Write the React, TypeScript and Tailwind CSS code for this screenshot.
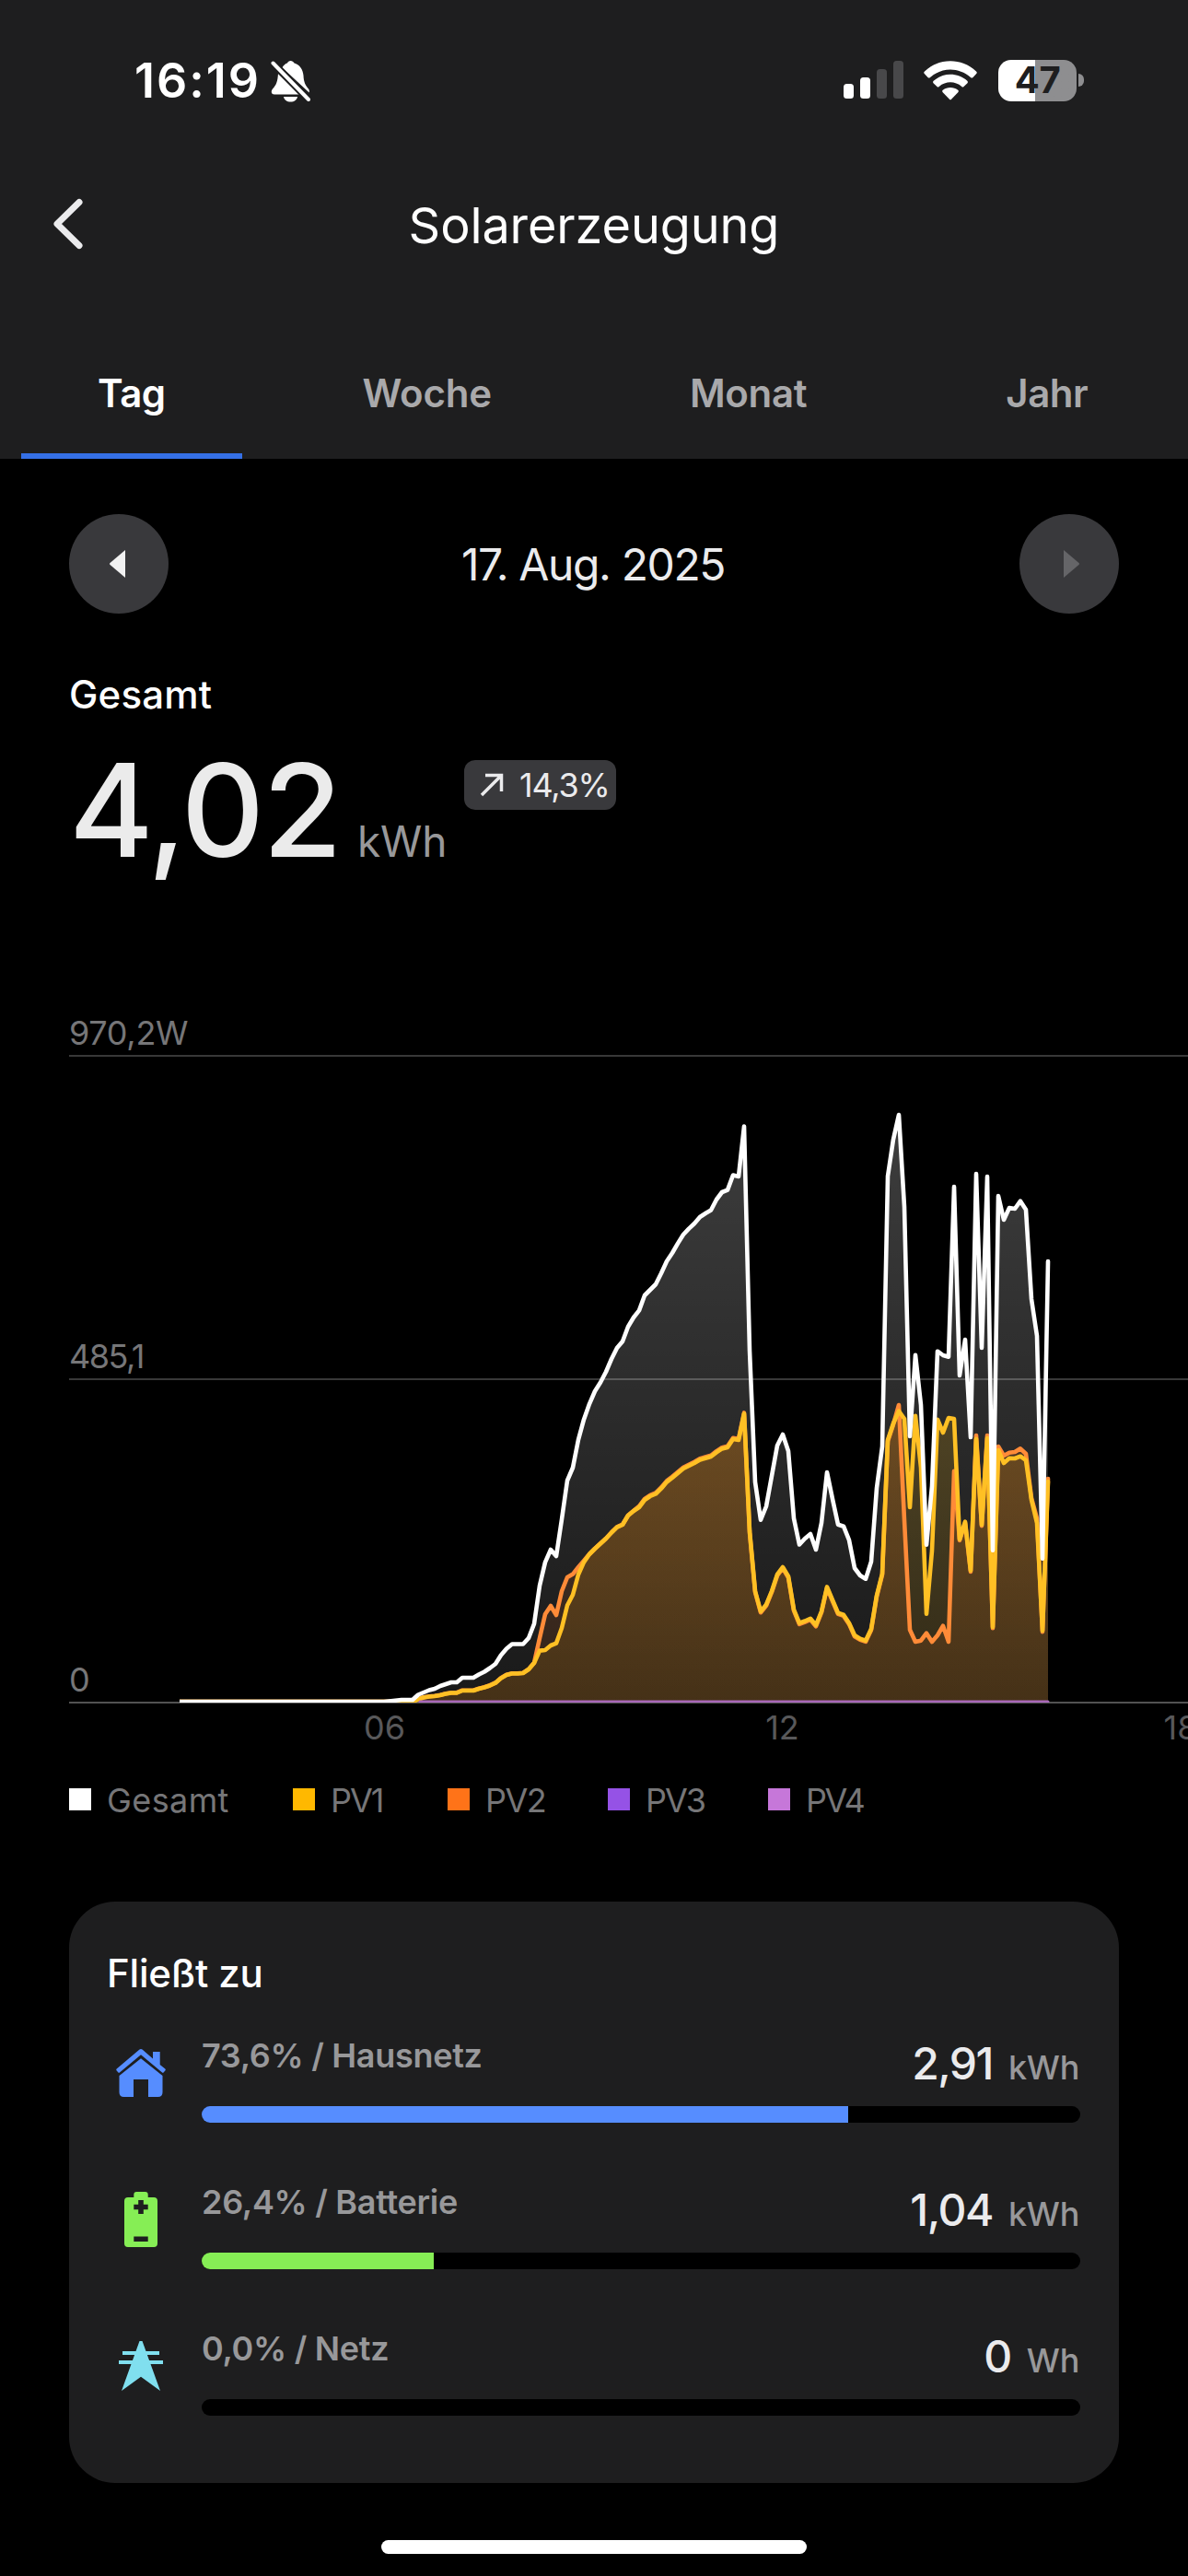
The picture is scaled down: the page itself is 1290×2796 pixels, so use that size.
import { ReactNode } from "react";

const CHART_TOP = 1100;
const BASELINE = 1847;
const STEP = 6;

// y values per 5 minutes, first sample sits at START_X
const START_X = 448;

const total = [
    1845, 1839.5, 1837, 1834.5, 1833, 1830, 1828, 1826, 1826, 1821, 1821, 1821, 1817.5, 1814.5, 1810.5, 1806, 1796.5,
    1789.5, 1784.5, 1784.5, 1784.5, 1778, 1762.5, 1721, 1695.6, 1682, 1689, 1649, 1607, 1593, 1562.6, 1540.7, 1523.8,
    1510, 1500.5, 1489, 1475, 1463, 1456, 1440, 1430, 1422.4, 1406, 1400, 1394, 1382, 1369, 1360, 1349.6, 1340, 1333.6,
    1328, 1321, 1317, 1313.5, 1302, 1294, 1291.6, 1275.5, 1277, 1222.5, 1466, 1608.6, 1649.6, 1635, 1602, 1569, 1557,
    1575, 1648, 1676.4, 1670, 1665, 1682, 1653, 1598, 1627, 1654.7, 1656.7, 1671.7, 1702, 1710, 1713.7, 1695, 1615,
    1570, 1276.7, 1236.7, 1210, 1310, 1559, 1470.7, 1525, 1676.7, 1613, 1466.7, 1471, 1472.7, 1288, 1493, 1454, 1560,
    1274, 1463, 1277, 1682.7, 1298, 1324, 1311, 1312, 1303.7, 1313, 1410, 1450, 1691.7, 1369,
];

const pv1 = [
    1847, 1844.5, 1842.5, 1841.5, 1841, 1840, 1838.5, 1837.5, 1837.5, 1835, 1835, 1835, 1833, 1831.5, 1829.5, 1826.7,
    1821.6, 1818, 1816.5, 1816.5, 1816, 1812, 1805, 1791.6, 1791, 1786, 1783.6, 1767, 1742.5, 1731, 1709, 1695.6, 1687,
    1681, 1675.5, 1670, 1663.5, 1657.7, 1655, 1645, 1640, 1636, 1628, 1624, 1621.5, 1615.7, 1608.6, 1604, 1599, 1594,
    1591, 1588, 1584.5, 1582.7, 1581, 1576.4, 1572.4, 1571, 1562, 1563, 1534.6, 1662, 1727, 1749, 1741.6, 1727, 1709,
    1701, 1711, 1747, 1761.7, 1759.5, 1756.8, 1764, 1749, 1722.4, 1736.7, 1750.7, 1752.7, 1761.7, 1775, 1778.7, 1780.7,
    1768, 1731.7, 1708, 1563, 1545, 1531.7, 1540, 1636, 1536.7, 1593, 1751.7, 1683, 1540.7, 1555, 1539, 1540, 1670.7,
    1651.7, 1704.7, 1561.7, 1655, 1561, 1766, 1574, 1588, 1582.7, 1583, 1580.7, 1585, 1628, 1653, 1770, 1608,
];

// PV2 follows PV1 apart from these samples
const pv2Changes: Record<number, number> = {
    23: 1778, 24: 1752, 25: 1743, 26: 1753, 27: 1727, 28: 1712, 29: 1708.6, 30: 1701, 31: 1694,
    88: 1525, 89: 1650, 90: 1769, 91: 1782, 92: 1780.7, 93: 1772.7, 94: 1782, 95: 1775, 96: 1764.7, 97: 1782,
    98: 1596.7, 102: 1558, 104: 1558, 106: 1570, 107: 1580, 108: 1576.7, 109: 1576, 110: 1572.3, 111: 1578,
    112: 1626, 113: 1648, 115: 1605,
};

const pv2 = pv1.map((y, i) => pv2Changes[i] ?? (i < 61 ? y - (i > 40 ? 1.2 : 0.3) : y + 1.2));

function toLine(values: number[]) {
    return values.map((y, i) => `L${START_X + i * STEP} ${y}`).join(" ");
}

const END_X = START_X + (total.length - 1) * STEP;
const totalLine = `M195 1847 H417 L427 1846 L436 1845 ${toLine(total)}`;
const pv1Line = `M195 1847 H436 ${toLine(pv1)}`;
const pv2Line = `M195 1847 H436 ${toLine(pv2)}`;
const close = `V${BASELINE + 1} H195 Z`;

const legend = [
    { name: "Gesamt", color: "bg-white", width: "w-[243px]", tracking: "tracking-[0.4px]" },
    { name: "PV1", color: "bg-[#ffb800]", width: "w-[168px]", tracking: "tracking-[-2px]" },
    { name: "PV2", color: "bg-[#ff7318]", width: "w-[174px]", tracking: "tracking-[-1.5px]" },
    { name: "PV3", color: "bg-[#9552e6]", width: "w-[174px]", tracking: "tracking-[-2px]" },
    { name: "PV4", color: "bg-[#c677d9]", width: "w-[174px]", tracking: "tracking-[-2.5px]" },
];

function StatusBar() {
    return (
        <div className="flex h-[174px] items-center pl-[146px] pr-[113px]">
            <span className="mt-0.5 w-[148px] text-[52px] font-semibold leading-none tracking-[2px]">16:19</span>
            <svg className="mt-0.5" width="44" height="46" viewBox="0 0 44 46" fill="#fff">
                <path d="M12 9C14 5.500 16 4 18 3.500C19 0 24 0 25.500 3.500C31 5 35 10 35.500 17C35.800 24 37.500 27.500 41 31.500C42 33 42 34 41.700 35.500L12.500 8.500Z" />
                <path d="M8 15L31.500 37.500H4C0.500 37.500 0 34 2 31.500C6 27.500 7.500 23 8 15Z" />
                <path d="M14 40H29C28.500 43.500 25.500 45.500 21.500 45.500C17.500 45.500 14.500 43.500 14 40Z" />
                <path d="M2.500 3.500L41 43" stroke="#1e1e1f" strokeWidth="8" />
                <path d="M2.500 3.500L41 43" stroke="#fff" strokeWidth="4" strokeLinecap="round" />
            </svg>
            <div className="ml-auto flex items-center">
                <svg width="65" height="42" viewBox="0 0 65 42" fill="#fff">
                    <rect x="0" y="25" width="11" height="16" rx="3.500" />
                    <rect x="18" y="18" width="11" height="23" rx="3.500" />
                    <rect x="36" y="9" width="11" height="32" rx="3.500" fill="#48484a" />
                    <rect x="54" y="0" width="11" height="41" rx="3.500" fill="#48484a" />
                </svg>
                <svg className="ml-[22px]" width="58" height="43" viewBox="0 0 58 43" fill="#fff">
                    <path d="M1 14.200Q-0.600 12.800 1 11.400C17 -3.500 41 -3.500 57 11.400Q58.600 12.800 57 14.200L53.500 18Q52.200 19 51 18C38 6.500 20 6.500 7 18Q5.800 19 4.500 18Z" />
                    <path d="M10.500 24.200Q9.500 23 10.700 21.800C21 12.500 37 12.500 47.300 21.800Q48.500 23 47.500 24.200L43.500 28Q42.500 29 41.300 28C34 21.800 24 21.800 16.700 28Q15.500 29 14.500 28Z" />
                    <path d="M20.500 34Q19.500 32.800 20.800 31.800C25.500 28.200 32.500 28.200 37.200 31.800Q38.500 32.800 37.500 34L30 41.700Q29 42.700 28 41.700Z" />
                </svg>
                <div className="ml-[23px] flex h-[45px] w-[85px] items-center justify-center rounded-[14px] bg-linear-to-r from-white from-47% to-[#8e8e90] to-47%">
                    <span className="text-[40px] font-bold leading-none tracking-[-0.5px] text-[#1e1e1f]">47</span>
                </div>
                <div className="ml-0.5 h-[14px] w-[6px] rounded-r-full bg-[#8e8e90]" />
            </div>
        </div>
    );
}

function Header() {
    return (
        <header className="h-[498px] bg-[#1e1e1f]">
            <StatusBar />
            <div className="relative flex h-[140px] items-center justify-center">
                <svg className="absolute left-[56px] top-[40px]" width="36" height="60" viewBox="0 0 36 60" fill="none">
                    <path d="M30 5.500L6 29L30 52.500" stroke="#ebebed" strokeWidth="7" strokeLinecap="round" strokeLinejoin="round" />
                </svg>
                <h1 className="mt-0.5 text-[54px] leading-none tracking-[-0.1px]">Solarerzeugung</h1>
            </div>
            <nav className="flex h-[184px] pl-[106px] text-[42px] font-semibold tracking-[-0.5px] text-[#a9a9ab]">
                <div className="relative pt-[92px] leading-[42px] text-white">
                    Tag
                    <span className="absolute bottom-0 left-1/2 h-[6px] w-[240px] -translate-x-1/2 bg-[#3570e6]" />
                </div>
                <div className="ml-[214px] pt-[92px] leading-[42px] tracking-[-0.2px]">Woche</div>
                <div className="ml-[215px] pt-[92px] leading-[42px] tracking-[-0.3px]">Monat</div>
                <div className="ml-[216px] pt-[92px] leading-[42px]">Jahr</div>
            </nav>
        </header>
    );
}

function DateRow() {
    return (
        <div className="mt-[60px] flex h-[108px] items-center justify-between px-[75px]">
            <div className="flex h-[108px] w-[108px] items-center justify-center rounded-full bg-[#39393c]">
                <svg className="mr-1" width="17" height="30" viewBox="0 0 17 30" fill="#f2f2f2">
                    <path d="M17 0V30L0.500 16Q-0.500 15 0.500 14Z" />
                </svg>
            </div>
            <span className="mt-0.5 pr-0.5 text-[48px] leading-none tracking-[-1.4px] text-[#ebebed]">17. Aug. 2025</span>
            <div className="flex h-[108px] w-[108px] items-center justify-center rounded-full bg-[#39393c]">
                <svg className="ml-1" width="17" height="30" viewBox="0 0 17 30" fill="#656568">
                    <path d="M0 0V30L16.500 16Q17.500 15 16.500 14Z" />
                </svg>
            </div>
        </div>
    );
}

function Summary() {
    return (
        <section className="h-[434px] px-[75px] pt-[67px]">
            <h2 className="text-[42px] font-medium leading-[42px] tracking-[0.2px]">Gesamt</h2>
            <div className="mt-[34px] flex h-[140px] items-start">
                <span className="w-[313px] text-[140px] font-medium leading-[140px] tracking-[-2px] text-[#ebebeb]">4,02</span>
                <span className="mt-[81px] w-[116px] text-[46px] leading-[46px] tracking-[-0.2px] text-[#98989a]">kWh</span>
                <div className="mt-4 flex h-[54px] w-[165px] items-center rounded-xl bg-[#39393c] pl-[17px]">
                    <svg width="26" height="26" viewBox="0 0 26 26" fill="none" stroke="#ebebed" strokeWidth="3.500">
                        <path d="M2 24L23 3M6 2.500H23.500V20" />
                    </svg>
                    <span className="ml-[17px] text-[36px] leading-none tracking-[-1.2px] text-[#ebebed]">14,3%</span>
                </div>
            </div>
        </section>
    );
}

function Gradient({ id, color }: { id: string; color: string }) {
    return (
        <linearGradient id={id} gradientUnits="userSpaceOnUse" x1="0" y1="1209" x2="0" y2="1848">
            <stop offset="0" stopColor={color} stopOpacity="0.24" />
            <stop offset="1" stopColor={color} stopOpacity="0.1" />
        </linearGradient>
    );
}

function Chart() {
    return (
        <svg className="block font-[Inter,sans-serif]" width="1290" height="800" viewBox={`0 ${CHART_TOP} 1290 800`}>
            <defs>
                <Gradient id="fillTotal" color="#ffffff" />
                <Gradient id="fillPv1" color="#ffb800" />
                <Gradient id="fillPv2" color="#ff7318" />
                <clipPath id="plot">
                    <rect x="195" y="1100" width="1000" height="748" />
                </clipPath>
            </defs>
            <path d={totalLine + close} fill="url(#fillTotal)" />
            <path d={pv1Line + close} fill="url(#fillPv1)" />
            <path d={pv2Line + close} fill="url(#fillPv2)" />
            <g fill="#fff">
                <rect x="75" y="1145" width="1215" height="2" opacity="0.22" />
                <rect x="75" y="1496" width="1215" height="2" opacity="0.22" />
                <rect x="75" y="1847" width="1215" height="2" opacity="0.32" />
            </g>
            <g clipPath="url(#plot)" fill="none" strokeWidth="4.600" strokeLinejoin="round" strokeLinecap="round">
                <path d={pv2Line} stroke="#ff8b38" />
                <path d={pv1Line} stroke="#ffc024" />
                <path d={totalLine} stroke="#fff" />
                <path d={`M456 1847H${END_X}`} stroke="#a868b8" strokeWidth="3" />
            </g>
            <g fontSize="36" fill="#767678">
                <text x="75" y="1134" letterSpacing="-0.3">970,2W</text>
                <text x="75" y="1485" letterSpacing="-1.5">485,1</text>
                <text x="75" y="1836">0</text>
            </g>
            <g fontSize="36" fill="#58585a" textAnchor="middle">
                <text x="417.500" y="1888">06</text>
                <text x="849.500" y="1888">12</text>
                <text x="1282" y="1888">18</text>
            </g>
        </svg>
    );
}

function Legend() {
    return (
        <div className="mt-[41px] flex h-[24px] items-center pl-[75px]">
            {legend.map((item) => (
                <div key={item.name} className={`flex items-center gap-[17px] ${item.width}`}>
                    <span className={`h-6 w-6 ${item.color}`} />
                    <span className={`mt-0.5 text-[36px] leading-none text-[#767678] ${item.tracking}`}>{item.name}</span>
                </div>
            ))}
        </div>
    );
}

function HouseIcon() {
    return (
        <svg width="54" height="52" viewBox="0 0 54 52" fill="#568dff">
            <path d="M25.500 0.600Q27 -0.500 28.500 0.600L40 10.500V3H47.700V17L53.300 21.500Q54.300 22.500 53.300 23.500L51.800 25.300Q50.800 26.300 49.800 25.300L27 6.300L4.200 25.300Q3.200 26.300 2.200 25.300L0.700 23.500Q-0.300 22.500 0.700 21.500Z" />
            <path d="M27 10.300L50.500 29V47Q50.500 52 45.500 52H35V33H19V52H8.500Q3.500 52 3.500 47V29Z" />
        </svg>
    );
}

function BatteryIcon() {
    return (
        <svg width="36" height="60" viewBox="0 0 36 60">
            <path d="M10.300 6V3Q10.300 0 13.300 0H22.700Q25.700 0 25.700 3V6H32Q36 6 36 10V56Q36 60 32 60H4Q0 60 0 56V10Q0 6 4 6Z" fill="#86ee55" />
            <path d="M15.200 9H20.800V13.700H25.700V19.300H20.800V24H15.200V19.300H10.300V13.700H15.200ZM10.300 48.500H25.700V54H10.300Z" fill="#1e1e1f" />
        </svg>
    );
}

function PowerlineIcon() {
    return (
        <svg width="48" height="54" viewBox="0 0 48 54" fill="#80dfef">
            <path d="M22.500 0H25.500L45 54L24 38.700L3 54Z" />
            <path d="M4 11H44V15H4ZM0 21H48V25H0Z" />
        </svg>
    );
}

interface FlowProps {
    icon: ReactNode;
    label: string;
    value: string;
    unit: string;
    percent: number;
    color: string;
}

function FlowRow({ icon, label, value, unit, percent, color }: FlowProps) {
    return (
        <div className="flex h-[159px]">
            <div className="ml-10 flex h-[88px] w-[76px] items-center justify-center">{icon}</div>
            <div className="ml-7 w-[954px]">
                <div className="flex h-[80px] justify-between">
                    <span className="mt-[7px] text-[36px] font-semibold leading-[36px] tracking-[-0.3px] text-[#98989a]">{label}</span>
                    <div className="mr-px flex items-baseline gap-[17px] leading-[68px]">
                        <span className="text-[48px] font-medium tracking-[-1.5px] text-[#ebebed]">{value}</span>
                        <span className="text-[36px] font-medium tracking-[-0.3px] text-[#98989a]">{unit}</span>
                    </div>
                </div>
                <div className="h-[18px] overflow-hidden rounded-full bg-black">
                    <div className={`h-full ${color}`} style={{ width: `${percent}%` }} />
                </div>
            </div>
        </div>
    );
}

export default function App() {
    return (
        <div className="flex h-[2796px] w-[1290px] flex-col overflow-hidden bg-black font-[Inter,sans-serif] text-white">
            <Header />
            <DateRow />
            <Summary />
            <Chart />
            <Legend />
            <section className="mx-[75px] mt-[99px] h-[631px] rounded-[50px] bg-[#1e1e1f] pt-[57px]">
                <h2 className="ml-[41px] text-[42px] font-medium leading-[42px] tracking-[-0.2px]">Fließt zu</h2>
                <div className="mt-[43px]">
                    <FlowRow icon={<HouseIcon />} label="73,6% / Hausnetz" value="2,91" unit="kWh" percent={73.6} color="bg-[#568dff]" />
                    <FlowRow icon={<BatteryIcon />} label="26,4% / Batterie" value="1,04" unit="kWh" percent={26.4} color="bg-[#86ee55]" />
                    <FlowRow icon={<PowerlineIcon />} label="0,0% / Netz" value="0" unit="Wh" percent={0} color="bg-[#80dfef]" />
                </div>
            </section>
            <div className="mx-auto mt-[62px] h-[15px] w-[462px] rounded-full bg-white" />
        </div>
    );
}
